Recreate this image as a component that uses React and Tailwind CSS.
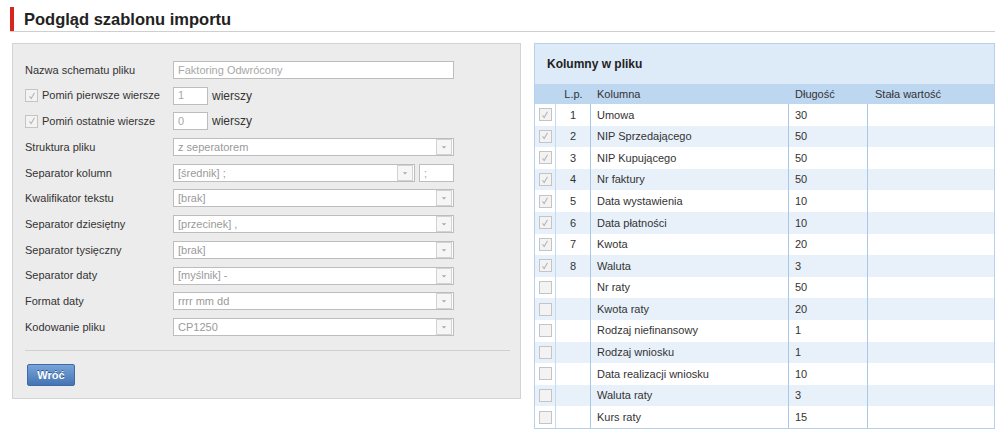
const fields = [
  { label: "Struktura pliku", value: "z seperatorem" },
  { label: "Separator kolumn", value: "[średnik] ;", extra: ";" },
  { label: "Kwalifikator tekstu", value: "[brak]" },
  { label: "Separator dziesiętny", value: "[przecinek] ," },
  { label: "Separator tysięczny", value: "[brak]" },
  { label: "Separator daty", value: "[myślnik] -" },
  { label: "Format daty", value: "rrrr mm dd" },
  { label: "Kodowanie pliku", value: "CP1250" },
];

const columns = [
  { lp: 1, name: "Umowa", len: 30, on: true },
  { lp: 2, name: "NIP Sprzedającego", len: 50, on: true },
  { lp: 3, name: "NIP Kupującego", len: 50, on: true },
  { lp: 4, name: "Nr faktury", len: 50, on: true },
  { lp: 5, name: "Data wystawienia", len: 10, on: true },
  { lp: 6, name: "Data płatności", len: 10, on: true },
  { lp: 7, name: "Kwota", len: 20, on: true },
  { lp: 8, name: "Waluta", len: 3, on: true },
  { lp: "", name: "Nr raty", len: 50 },
  { lp: "", name: "Kwota raty", len: 20 },
  { lp: "", name: "Rodzaj niefinansowy", len: 1 },
  { lp: "", name: "Rodzaj wniosku", len: 1 },
  { lp: "", name: "Data realizacji wniosku", len: 10 },
  { lp: "", name: "Waluta raty", len: 3 },
  { lp: "", name: "Kurs raty", len: 15 },
];

const Check = ({ on }) => (
  <span className="w-[13px] h-[13px] border border-[#c4c4c4] bg-[#f3f3f3] flex items-center justify-center shrink-0">
    {on && (
      <svg viewBox="0 0 12 12" className="w-[10px] h-[10px]" fill="none" stroke="#b5b5b5" strokeWidth="1.3">
        <path d="M3 6.5l2 2.5 4-7" />
      </svg>
    )}
  </span>
);

const Select = ({ value, className = "" }) => (
  <div className={`h-[18px] border border-[#bdbdbd] bg-white flex items-center ${className}`}>
    <span className="flex-1 pl-[4px] text-[#9a9a9a] truncate">{value}</span>
    <span className="w-[16px] h-[16px] mr-px border border-[#d2d2d2] bg-[#f6f6f6] flex items-center justify-center">
      <svg viewBox="0 0 8 8" className="w-[6px] h-[6px]" fill="#a8a8a8">
        <path d="M1 3h6L4 6z" />
      </svg>
    </span>
  </div>
);

const Input = ({ value, className = "" }) => (
  <div className={`h-[18px] border border-[#bdbdbd] bg-white flex items-center pl-[4px] text-[#a8a8a8] ${className}`}>
    {value}
  </div>
);

export default function App() {
  return (
    <div className="w-[1004px] h-[435px] bg-white text-[11px] text-[#333] overflow-hidden" style={{ fontFamily: '"Liberation Sans", Arial, sans-serif' }}>
      {/* Heading */}
      <div className="pl-[10px] pr-[9px] pt-[7px]">
        <div className="flex items-stretch border-b border-[#cfcfcf]">
          <span className="w-[4px] h-[24px] bg-[#d9261c]" />
          <h1 className="pl-[10px] text-[16.5px] font-bold text-[#222] leading-[24px]">Podgląd szablonu importu</h1>
        </div>
      </div>

      <div className="flex items-start pl-[12px] pt-[11px] gap-[13px]">
        {/* Left form panel */}
        <div className="w-[509px] bg-[#ececec] border border-[#d3d3d3] pt-[17px] pb-[12px] px-[12px]">
          <div className="flex flex-col gap-[7.7px]">
            <div className="h-[18px] flex items-center">
              <span className="w-[148px]">Nazwa schematu pliku</span>
              <Input value="Faktoring Odwrócony" className="w-[281px]" />
            </div>
            {[
              ["Pomiń pierwsze wiersze", "1"],
              ["Pomiń ostatnie wiersze", "0"],
            ].map(([l, v]) => (
              <div key={l} className="h-[18px] flex items-center">
                <span className="w-[148px] flex items-center gap-[4px]">
                  <Check on />
                  {l}
                </span>
                <Input value={v} className="w-[35px]" />
                <span className="ml-[4px] text-[12px]">wierszy</span>
              </div>
            ))}
            {fields.map((f) => (
              <div key={f.label} className="h-[18px] flex items-center">
                <span className="w-[148px]">{f.label}</span>
                {f.extra ? (
                  <>
                    <Select value={f.value} className="w-[242px]" />
                    <Input value={f.extra} className="w-[35px] ml-[4px]" />
                  </>
                ) : (
                  <Select value={f.value} className="w-[281px]" />
                )}
              </div>
            ))}
          </div>
          <div className="mt-[14px] border-t border-[#d0d0d0] w-[485px]" />
          <button className="mt-[13px] ml-[2px] w-[48px] h-[22px] rounded-[2px] border border-[#3e6aa6] bg-gradient-to-b from-[#78a4d8] to-[#4474b3] text-white font-bold text-[11px] [text-shadow:0_-1px_0_#2d5490]">
            Wróć
          </button>
        </div>

        {/* Right columns table */}
        <div className="w-[461px] border border-[#b7d1ea] bg-[#ddebf8]">
          <div className="h-[40px] flex items-center pl-[12px] text-[12px] font-bold text-[#222]">Kolumny w pliku</div>
          <div className="h-[20px] flex items-center bg-[#bdd7f1] text-[#333]">
            <span className="w-[21px]" />
            <span className="w-[35px] text-center">L.p.</span>
            <span className="w-[198px] pl-[6px]">Kolumna</span>
            <span className="w-[79px] pl-[6px]">Długość</span>
            <span className="flex-1 pl-[7px]">Stała wartość</span>
          </div>
          {columns.map((c, i) => (
            <div key={c.name} className={`h-[21.6px] flex items-stretch ${i % 2 ? "bg-[#e8f1fa]" : "bg-white"}`}>
              <span className="w-[21px] flex items-center justify-center border-r border-[#c4dbef]">
                <Check on={c.on} />
              </span>
              <span className="w-[35px] flex items-center justify-center border-r border-[#a9c8e6]">{c.lp}</span>
              <span className="w-[198px] flex items-center pl-[6px] border-r border-[#a9c8e6]">{c.name}</span>
              <span className="w-[79px] flex items-center pl-[6px] border-r border-[#a9c8e6]">{c.len}</span>
              <span className="flex-1" />
            </div>
          ))}
        </div>
      </div>
    </div>
  );
}
